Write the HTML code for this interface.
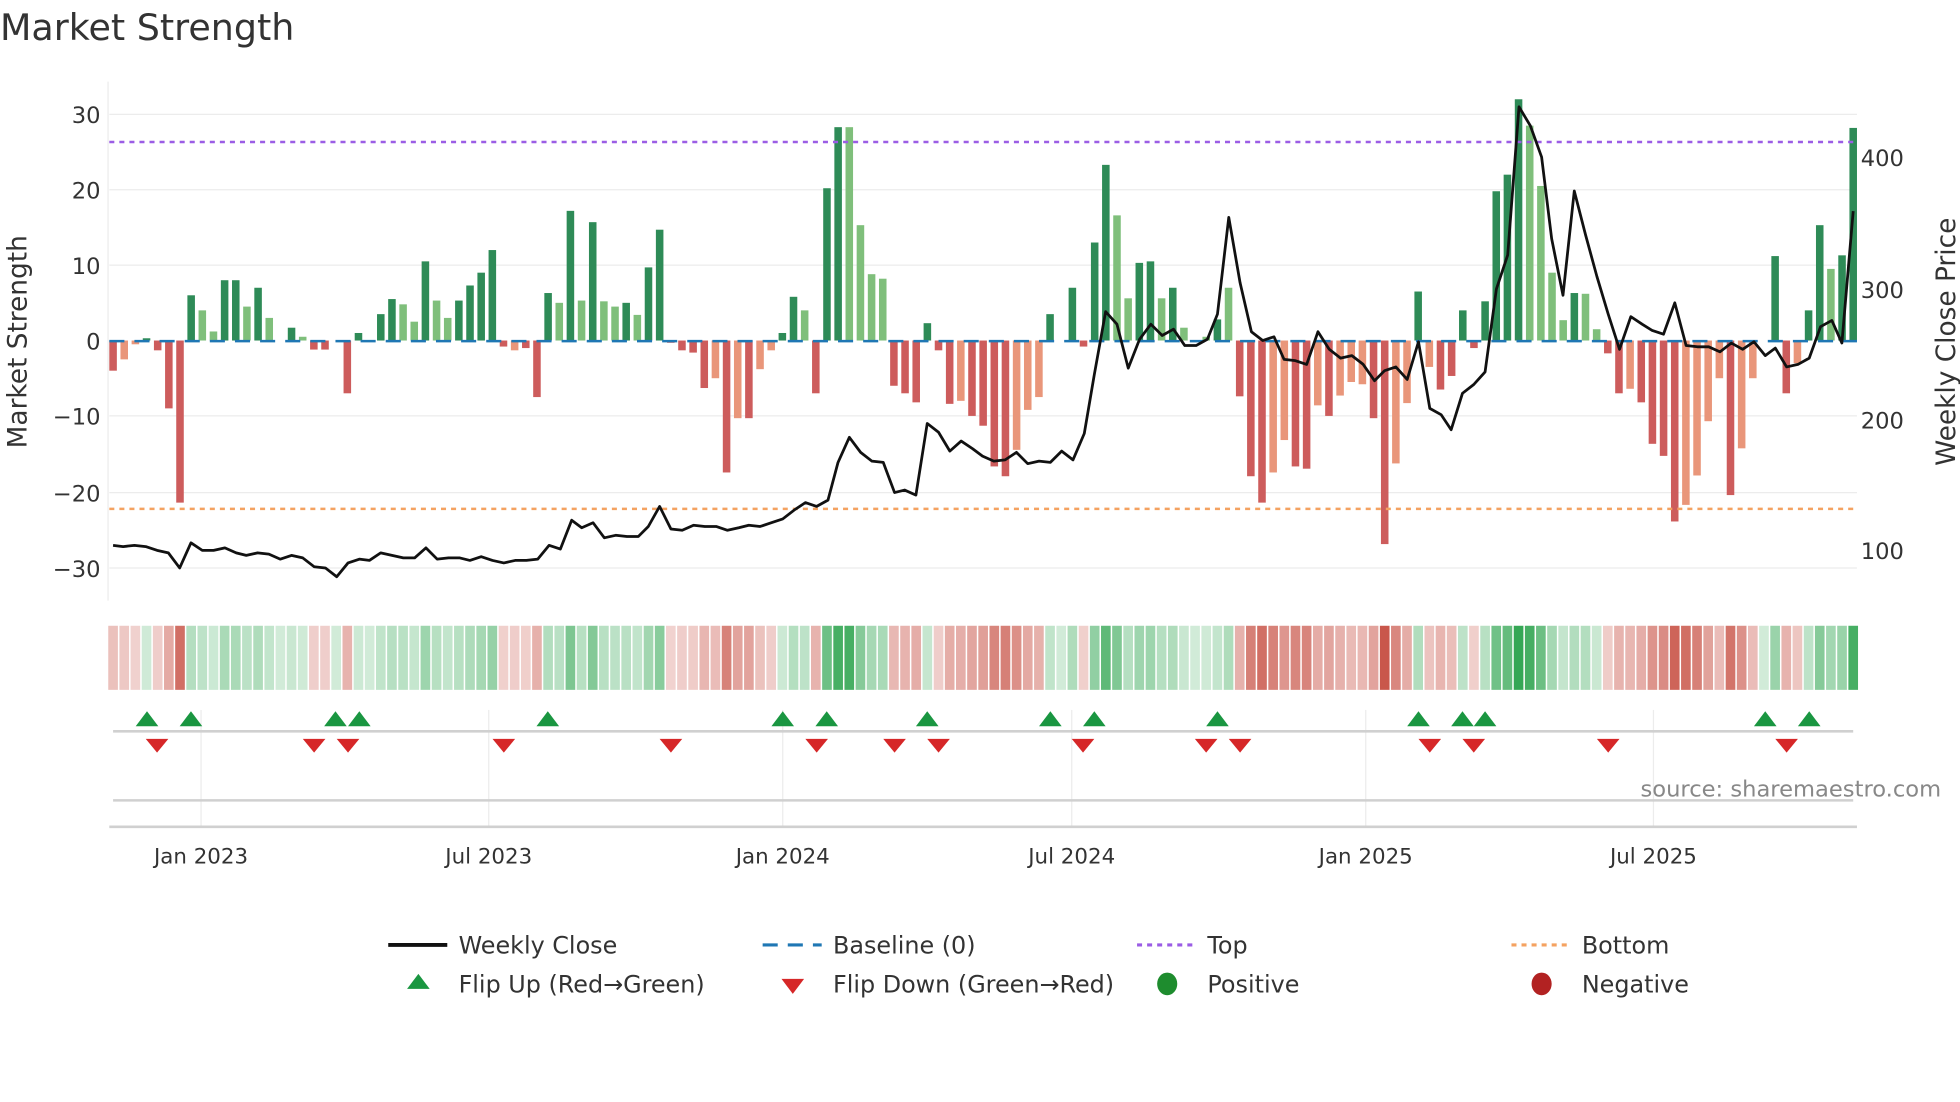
<!DOCTYPE html>
<html><head><meta charset="utf-8"><style>
html,body{margin:0;padding:0;background:#fff;width:1960px;height:1102px;overflow:hidden}
svg{display:block}
text{font-family:"DejaVu Sans","Liberation Sans",sans-serif}
</style></head><body>
<svg id="s" width="1960" height="1102" viewBox="0 0 1560 877" preserveAspectRatio="none" xmlns="http://www.w3.org/2000/svg">
<rect width="1560" height="877" fill="#fff"/>
<text x="0" y="32" font-size="29" fill="#333">Market Strength</text>
<g stroke="#ececec" stroke-width="1">
<line x1="87" x2="1478" y1="91" y2="91"/><line x1="87" x2="1478" y1="151" y2="151"/>
<line x1="87" x2="1478" y1="211" y2="211"/><line x1="87" x2="1478" y1="331" y2="331"/>
<line x1="87" x2="1478" y1="392" y2="392"/><line x1="87" x2="1478" y1="452" y2="452"/>
<line x1="86" x2="86" y1="65" y2="478"/>
<line x1="160" x2="160" y1="565" y2="658"/><line x1="389" x2="389" y1="565" y2="658"/>
<line x1="623" x2="623" y1="565" y2="658"/><line x1="853" x2="853" y1="565" y2="658"/>
<line x1="1087" x2="1087" y1="565" y2="658"/><line x1="1316" x2="1316" y1="565" y2="658"/>
</g>
<g font-size="18" fill="#333" text-anchor="end">
<text x="80" y="98">30</text><text x="80" y="158">20</text><text x="80" y="218">10</text>
<text x="80" y="278">0</text><text x="80" y="338">−10</text><text x="80" y="399">−20</text><text x="80" y="459">−30</text>
</g>
<g font-size="18" fill="#333">
<text x="1481" y="132">400</text><text x="1481" y="237">300</text><text x="1481" y="341">200</text><text x="1481" y="445">100</text>
</g>
<text transform="translate(21,272) rotate(-90)" font-size="21" fill="#333" text-anchor="middle">Market Strength</text>
<text transform="translate(1556,272) rotate(-90)" font-size="21" fill="#333" text-anchor="middle">Weekly Close Price</text>
<g id="bars"></g>
<line x1="87" x2="1478" y1="271.5" y2="271.5" stroke="#1f77b4" stroke-width="2" stroke-dasharray="12,8"/>
<line x1="87" x2="1478" y1="113" y2="113" stroke="#9b5de5" stroke-width="2" stroke-dasharray="4,4"/>
<line x1="87" x2="1478" y1="405" y2="405" stroke="#f4a261" stroke-width="2" stroke-dasharray="4,4"/>
<polyline id="price" fill="none" stroke="#111" stroke-width="2.2" stroke-linejoin="round"/>
<g id="strip"></g>
<line x1="90" x2="1475" y1="582" y2="582" stroke="#d0d0d0" stroke-width="2"/>
<line x1="90" x2="1475" y1="637" y2="637" stroke="#d0d0d0" stroke-width="2"/>
<line x1="87" x2="1478" y1="658" y2="658" stroke="#d0d0d0" stroke-width="2"/>
<g id="mk"></g>
<text x="1545" y="634" font-size="18" fill="#888" text-anchor="end">source: sharemaestro.com</text>
<g font-size="17" fill="#333" text-anchor="middle">
<text x="160" y="687">Jan 2023</text><text x="389" y="687">Jul 2023</text><text x="623" y="687">Jan 2024</text>
<text x="853" y="687">Jul 2024</text><text x="1087" y="687">Jan 2025</text><text x="1316" y="687">Jul 2025</text>
</g>
<g font-size="19" fill="#333">
<line x1="309" x2="356" y1="752" y2="752" stroke="#111" stroke-width="3"/><text x="365" y="759">Weekly Close</text>
<line x1="607" x2="654" y1="752" y2="752" stroke="#1f77b4" stroke-width="2.5" stroke-dasharray="12,8"/><text x="663" y="759">Baseline (0)</text>
<line x1="905" x2="950" y1="752" y2="752" stroke="#9b5de5" stroke-width="2.5" stroke-dasharray="4,4"/><text x="961" y="759">Top</text>
<line x1="1203" x2="1248" y1="752" y2="752" stroke="#f4a261" stroke-width="2.5" stroke-dasharray="4,4"/><text x="1259" y="759">Bottom</text>
<polygon points="333,775 342,787 324,787" fill="#1a9641"/><text x="365" y="790">Flip Up (Red→Green)</text>
<polygon points="622,779 640,779 631,791" fill="#d62728"/><text x="663" y="790">Flip Down (Green→Red)</text>
<ellipse cx="929" cy="783" rx="8" ry="9" fill="#1e8c2e"/><text x="961" y="790">Positive</text>
<ellipse cx="1227" cy="783" rx="8" ry="9" fill="#b22222"/><text x="1259" y="790">Negative</text>
</g>
</svg>
<script>
var V=[[-4,1],[-2.5,0],[-0.5,0],[0.3,1],[-1.3,1],[-9,1],[-21.5,1],[6,1],[4,0],[1.2,0],[8,1],[8,1],[4.5,0],[7,1],[3,0],[0,1],[1.7,1],[0.5,0],[-1.2,1],[-1.2,1],[0,1],[-7,1],[1,1],[0,1],[3.5,1],[5.5,1],[4.8,0],[2.5,0],[10.5,1],[5.3,0],[3,0],[5.3,1],[7.3,1],[9,1],[12,1],[-0.8,1],[-1.3,0],[-1,1],[-7.5,1],[6.3,1],[5,0],[17.2,1],[5.3,0],[15.7,1],[5.2,0],[4.5,0],[5,1],[3.4,0],[9.7,1],[14.7,1],[-0.3,1],[-1.3,1],[-1.6,1],[-6.3,1],[-5,0],[-17.5,1],[-10.3,0],[-10.3,1],[-3.8,0],[-1.3,0],[1,1],[5.8,1],[4,0],[-7,1],[20.2,1],[28.3,1],[28.3,0],[15.3,0],[8.8,0],[8.2,0],[-6,1],[-7,1],[-8.2,1],[2.3,1],[-1.3,1],[-8.4,1],[-8,0],[-10,1],[-11.3,1],[-16.7,1],[-18,1],[-14.5,0],[-9.2,0],[-7.5,0],[3.5,1],[0,1],[7,1],[-0.8,1],[13,1],[23.3,1],[16.6,0],[5.6,0],[10.3,1],[10.5,1],[5.6,0],[7,1],[1.7,0],[0,1],[0.5,0],[2.8,1],[7,0],[-7.4,1],[-18,1],[-21.5,1],[-17.5,0],[-13.2,0],[-16.7,1],[-17,1],[-8.6,0],[-10,1],[-7.3,0],[-5.5,0],[-5.8,0],[-10.3,1],[-27,1],[-16.3,0],[-8.3,0],[6.5,1],[-3.5,0],[-6.5,1],[-4.7,1],[4,1],[-1,1],[5.2,1],[19.8,1],[22,1],[32,1],[28.5,0],[20.5,0],[9,0],[2.7,0],[6.3,1],[6.2,0],[1.5,0],[-1.7,1],[-7,1],[-6.4,0],[-8.2,1],[-13.7,1],[-15.3,1],[-24,1],[-21.8,0],[-17.9,0],[-10.7,0],[-5,0],[-20.5,1],[-14.3,0],[-5,0],[0,1],[11.2,1],[-7,1],[-3,0],[4,1],[15.3,1],[9.5,0],[11.3,1],[28.2,1]];
var P=[[90,434],[98,435],[107,434],[116,435],[125,438],[134,440],[143,452],[152,432],[161,438],[170,438],[179,436],[188,440],[196,442],[205,440],[214,441],[223,445],[232,442],[241,444],[250,451],[259,452],[268,459],[277,448],[286,445],[294,446],[303,440],[312,442],[321,444],[330,444],[339,436],[348,445],[357,444],[366,444],[374,446],[383,443],[392,446],[401,448],[410,446],[419,446],[428,445],[437,434],[446,437],[455,414],[463,420],[472,416],[481,428],[490,426],[499,427],[508,427],[516,419],[525,403],[534,421],[543,422],[552,418],[561,419],[570,419],[579,422],[588,420],[596,418],[605,419],[614,416],[623,413],[632,406],[641,400],[650,403],[659,398],[667,368],[676,348],[685,360],[694,367],[703,368],[712,392],[720,390],[729,394],[738,337],[747,344],[756,359],[765,351],[774,357],[782,363],[791,367],[800,366],[809,360],[818,369],[827,367],[836,368],[845,359],[854,366],[863,345],[871,298],[880,248],[889,258],[898,293],[907,270],[916,258],[925,267],[934,262],[943,275],[952,275],[961,270],[969,250],[978,173],[987,225],[996,264],[1005,271],[1014,268],[1022,286],[1031,287],[1040,290],[1049,264],[1058,278],[1067,285],[1076,283],[1085,290],[1094,303],[1102,295],[1111,292],[1120,302],[1129,272],[1138,325],[1147,330],[1155,342],[1164,313],[1173,306],[1182,296],[1191,230],[1200,203],[1209,85],[1218,100],[1227,125],[1235,190],[1244,235],[1253,152],[1262,187],[1271,220],[1280,250],[1289,278],[1298,252],[1307,258],[1315,263],[1324,266],[1333,241],[1342,275],[1351,276],[1360,276],[1369,280],[1378,273],[1387,278],[1396,272],[1405,283],[1413,277],[1422,292],[1431,290],[1440,285],[1449,260],[1458,255],[1466,273],[1475,168]];
var NS="http://www.w3.org/2000/svg";
function el(t,a,p){var e=document.createElementNS(NS,t);for(var k in a)e.setAttribute(k,a[k]);document.getElementById(p).appendChild(e);}
var n=V.length,x0=90,x1=1475,step=(x1-x0)/(n-1);
for(var i=0;i<n;i++){var v=V[i][0],d=V[i][1],x=x0+i*step;
 var c=v>=0?(d?"#2e8b57":"#7fbf7b"):(d?"#cd5c5c":"#e9967a");
 var h=Math.abs(v)*6;if(h>0.5)el("rect",{x:x-3,y:v>=0?271-h:271,width:6,height:h,fill:c},"bars");
 var a=0.22+Math.min(Math.abs(v),32)/32*0.75;
 el("rect",{x:x-step/2+0.6,y:498,width:step-1.2,height:51,fill:v>=0?"#2ea44f":"#c0392b","fill-opacity":a},"strip");}
document.getElementById("price").setAttribute("points",P.map(function(p){return p.join(",")}).join(" "));
[117,152,267,286,436,623,658,738,836,871,969,1129,1164,1182,1405,1440].forEach(function(x){el("polygon",{points:(x)+",566 "+(x+9)+",578 "+(x-9)+",578",fill:"#1a9641"},"mk");});
[125,250,277,401,534,650,712,747,862,960,987,1138,1173,1280,1422].forEach(function(x){el("polygon",{points:(x-9)+",588 "+(x+9)+",588 "+x+",599",fill:"#d62728"},"mk");});
</script>
</body></html>
